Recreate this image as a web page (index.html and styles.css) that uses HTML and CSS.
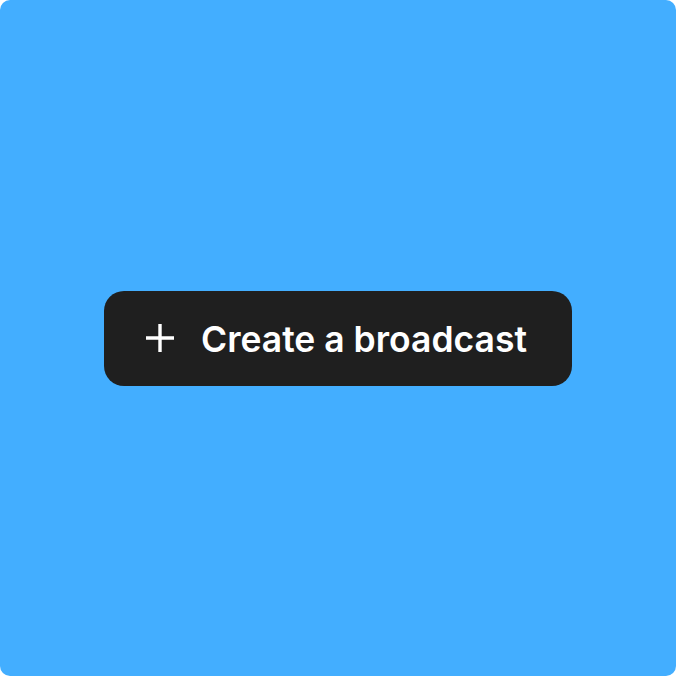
FILE: index.html
```html
<!DOCTYPE html>
<html>
<head>
<meta charset="utf-8">
<link rel="stylesheet" href="styles.css">
</head>
<body>
<div class="canvas">
  <button class="cta">
    <svg class="plus" width="28" height="28" viewBox="0 0 28 28" aria-hidden="true">
      <path d="M14 0V28M0 14H28" stroke="#fff" stroke-width="3.4"/>
    </svg>
    <span class="label">Create a broadcast</span>
  </button>
</div>
</body>
</html>
```
FILE: styles.css
```css
html, body {
  margin: 0;
  padding: 0;
  background: #ffffff;
}
.canvas {
  width: 676px;
  height: 676px;
  background: #43aeff;
  border-radius: 10px;
  display: flex;
  align-items: center;
  justify-content: center;
}
.cta {
  display: flex;
  align-items: center;
  gap: 27px;
  height: 95px;
  padding: 0 45px 0 42px;
  border: none;
  border-radius: 20px;
  background: #1f1f1f;
  color: #ffffff;
  font-family: Inter, "Noto Sans", sans-serif;
  font-weight: 600;
  font-size: 35.5px;
  cursor: pointer;
}
.plus {
  display: block;
  flex: none;
}
.label {
  line-height: 1;
  margin-top: 4px;
}
```
